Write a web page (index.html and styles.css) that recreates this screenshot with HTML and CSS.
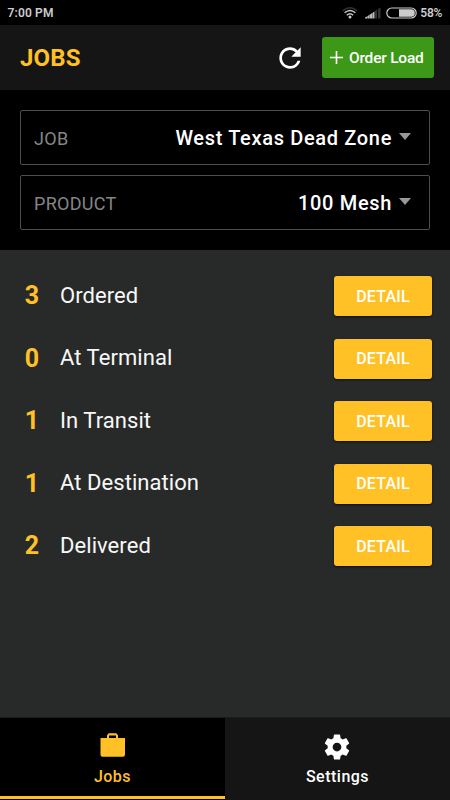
FILE: index.html
```html
<!DOCTYPE html>
<html lang="en">
<head>
<meta charset="utf-8">
<title>Jobs</title>
<link rel="stylesheet" href="styles.css">
</head>
<body>
<div class="app">
  <div class="status">
    <span class="time">7:00 PM</span>
    <svg class="wifi" width="16" height="12" viewBox="0 0 16 12" fill="none" stroke-width="1.5">
      <path d="M.8 3.8Q8-2.2 15.2 3.8" stroke="#333"/>
      <path d="M2.6 5.8Q8 1.2 13.4 5.8M4.8 8.2Q8 5.4 11.2 8.2" stroke="#ccc"/>
      <circle cx="8" cy="9.9" r="1.5" fill="#ccc"/>
    </svg>
    <svg class="signal" width="16" height="12" viewBox="0 0 16 12">
      <path d="M0 11.5V10.5L2 9.5V11.5ZM2.3 11.5V9.2L4.5 7.8V11.5ZM4.8 11.5V7.6L7 6.2V11.5ZM7.3 11.5V6L9.5 4.5V11.5Z" fill="#bbb"/>
      <path d="M10 11.5V4L12 2.6V11.5ZM13 11.5V2L15.5.6V11.5Z" fill="#333"/>
    </svg>
    <svg class="battery" width="31" height="12" viewBox="0 0 31 12">
      <rect x=".8" y="1" width="29.4" height="10" rx="5" fill="none" stroke="#ccc" stroke-width="1.2"/>
      <path d="M13 2.2H25A3.8 3.8 0 0 1 25 9.8H13Z" fill="#ccc"/>
    </svg>
    <span class="percent">58%</span>
  </div>
  <header class="header">
    <h1>JOBS</h1>
    <svg class="refresh" width="32" height="32" viewBox="0 0 24 24" fill="#fff"><path d="M17.65 6.35A7.958 7.958 0 0 0 12 4c-4.42 0-7.99 3.58-7.99 8s3.57 8 7.99 8c3.73 0 6.84-2.55 7.73-6h-2.08A5.99 5.99 0 0 1 12 18c-3.31 0-6-2.69-6-6s2.69-6 6-6c1.66 0 3.14.69 4.22 1.78L13 11h7V4l-2.35 2.35z"/></svg>
    <button class="order">
      <svg width="13" height="13" viewBox="0 0 13 13" stroke="#fff" stroke-width="1.6"><path d="M6.5 0V13M0 6.5H13"/></svg>
      <span>Order Load</span>
    </button>
  </header>
  <section class="filters">
    <div class="select"><span class="label">JOB</span><span class="value">West Texas Dead Zone</span><svg width="12" height="7" viewBox="0 0 12 7"><path d="M0 0H12L6 7Z" fill="#999"/></svg></div>
    <div class="select"><span class="label">PRODUCT</span><span class="value">100 Mesh</span><svg width="12" height="7" viewBox="0 0 12 7"><path d="M0 0H12L6 7Z" fill="#999"/></svg></div>
  </section>
  <main class="list">
    <div class="row"><b>3</b><span>Ordered</span><button class="detail">DETAIL</button></div>
    <div class="row"><b>0</b><span>At Terminal</span><button class="detail">DETAIL</button></div>
    <div class="row"><b>1</b><span>In Transit</span><button class="detail">DETAIL</button></div>
    <div class="row"><b>1</b><span>At Destination</span><button class="detail">DETAIL</button></div>
    <div class="row"><b>2</b><span>Delivered</span><button class="detail">DETAIL</button></div>
  </main>
  <nav class="tabs">
    <div class="tab active">
      <svg width="26" height="30" viewBox="0 0 26 30"><path fill="#ffc125" fill-rule="evenodd" d="M.5 6H7V3.2L8.7 1.3H16.3L18 3.2V6H25V22.5Q25 24.8 23 24.8H2.5Q.5 24.8 .5 22.5ZM9 6H16V3.5H9Z"/></svg>
      <span>Jobs</span>
    </div>
    <div class="tab">
      <svg width="31" height="30" viewBox="0.4 0 24 24" fill="#fff"><path d="M19.43 12.98c.04-.32.07-.64.07-.98s-.03-.66-.07-.98l2.11-1.65c.19-.15.24-.42.12-.64l-2-3.46c-.12-.22-.39-.3-.61-.22l-2.49 1c-.52-.4-1.08-.73-1.69-.98l-.38-2.65A.488.488 0 0 0 14 2h-4c-.25 0-.46.18-.49.42l-.38 2.65c-.61.25-1.17.59-1.69.98l-2.49-1c-.23-.09-.49 0-.61.22l-2 3.46c-.13.22-.07.49.12.64l2.11 1.65c-.04.32-.07.65-.07.98s.03.66.07.98l-2.11 1.65c-.19.15-.24.42-.12.64l2 3.46c.12.22.39.3.61.22l2.49-1c.52.4 1.08.73 1.69.98l.38 2.65c.03.24.24.42.49.42h4c.25 0 .46-.18.49-.42l.38-2.65c.61-.25 1.17-.59 1.69-.98l2.49 1c.23.09.49 0 .61-.22l2-3.46c.12-.22.07-.49-.12-.64l-2.11-1.65zM12 15.5c-1.93 0-3.5-1.57-3.5-3.5s1.57-3.5 3.5-3.5 3.5 1.57 3.5 3.5-1.57 3.5-3.5 3.5z"/></svg>
      <span>Settings</span>
    </div>
  </nav>
</div>
</body>
</html>
```
FILE: styles.css
```css
* { box-sizing: border-box; }
body { margin: 0; background: #000; font-family: Roboto, sans-serif; color: #fff; }
button { border: 0; padding: 0; font: inherit; color: #fff; }
svg { display: block; flex: none; }
.app { width: 450px; height: 800px; display: flex; flex-direction: column; overflow: hidden; }
.status { height: 25px; display: flex; align-items: center; padding: 0 8px 0 7.5px; font-size: 12px; font-weight: 600; line-height: 16px; letter-spacing: .15px; color: #ccc; }
.time { margin-right: auto; }
.signal { margin-left: 7px; }
.battery { margin: 0 3px 0 5px; }
.percent { letter-spacing: -.3px; }
.header { height: 65px; background: #151515; display: flex; align-items: center; padding: 0 16px 0 20px; }
h1 { margin: 0 auto 0 0; font-size: 24px; font-weight: 700; line-height: 28px; letter-spacing: .2px; color: #ffc125; }
.refresh { margin-right: 16px; }
.order { width: 112px; height: 41px; border-radius: 3px; background: #3e9817; display: flex; align-items: center; padding-left: 8px; gap: 6px; font-size: 15.5px; font-weight: 500; letter-spacing: -.2px; white-space: nowrap; }
.filters { height: 160px; padding: 20px; display: flex; flex-direction: column; gap: 10px; }
.select { height: 55px; border: 1.5px solid #4d4d4d; border-radius: 2px; display: flex; align-items: center; padding: 0 18px 0 13px; }
.label { font-size: 18px; color: #858585; margin-right: auto; letter-spacing: .3px; padding-top: 2px; }
.value { font-size: 20px; font-weight: 500; letter-spacing: .66px; margin-right: 7px; }
.select svg { margin-bottom: 3px; }
.list { flex: 1; background: #282a29; padding-top: 15px; }
.row { height: 62.5px; display: flex; align-items: center; padding: 0 18px 0 19px; }
.row b { width: 26px; text-align: center; font-size: 25px; color: #ffc125; padding-bottom: 1px; }
.row span { margin-left: 15px; font-size: 22px; letter-spacing: .06px; color: #f8f8f8; padding-bottom: 2px; }
.detail { width: 98px; height: 40px; margin-left: auto; border-radius: 3px; background: #ffc125; box-shadow: 0 1px 2px #0b0d12; font-size: 16px; font-weight: 500; letter-spacing: .2px; }
.tabs { height: 83px; display: flex; border-top: 1px solid #1b1b1b; }
.tab { flex: 1; background: #151515; display: flex; flex-direction: column; align-items: center; font-size: 16px; font-weight: 500; letter-spacing: .5px; line-height: 20px; padding-top: 14px; }
.tab svg { height: 30px; }
.tab span { margin-top: 5px; }
.active { background: #000; color: #ffc125; box-shadow: inset 0 -1px #000, inset 0 -4px #ffc125; }
```
